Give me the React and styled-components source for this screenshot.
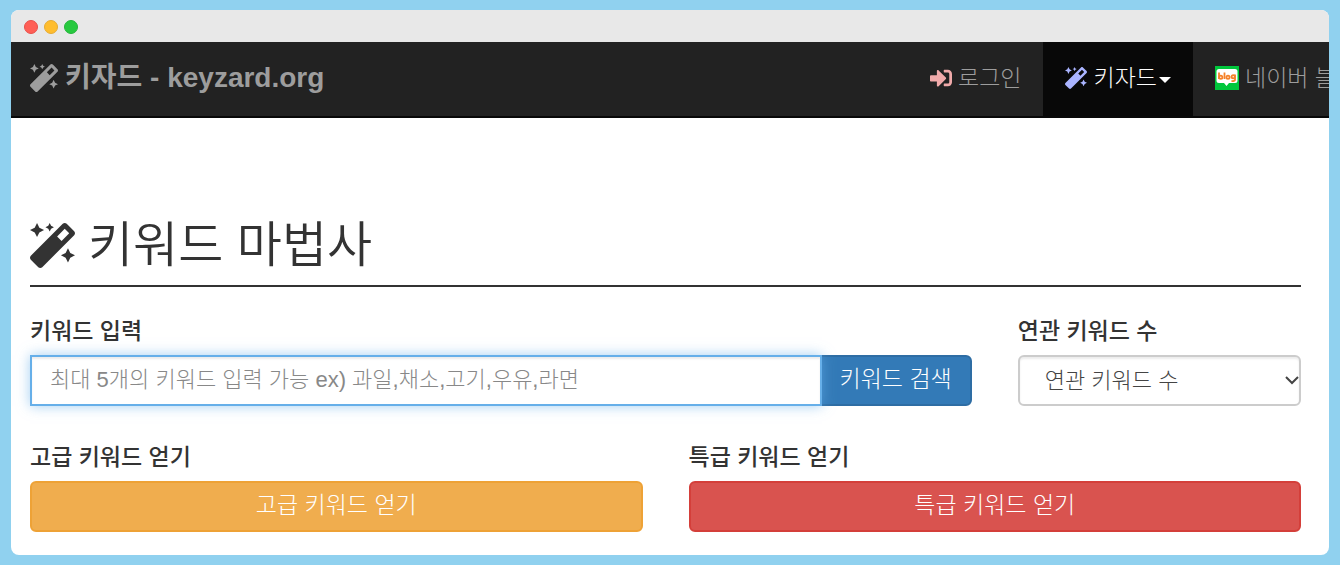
import React from "react";
import styled, { createGlobalStyle, css } from "styled-components";
import { FaMagic, FaSignInAlt } from "react-icons/fa";

const GlobalStyle = createGlobalStyle`
  *, *::before, *::after { box-sizing: border-box; }
  body {
    margin: 0;
    background: #90d1ef;
    color: #333;
    font-family: "Liberation Sans", "Noto Sans CJK KR", sans-serif;
    font-size: 22px;
    font-weight: 300;
    line-height: 30px;
  }
  button, input, select { font: inherit; }
`;

const Page = styled.div`
  min-height: 100vh;
  padding: 10px 11px;
  display: flex;
`;

const Window = styled.div`
  flex: 1;
  min-width: 0;
  background: #fff;
  border-radius: 8px;
  overflow: hidden;
`;

const TitleBar = styled.div`
  display: flex;
  align-items: center;
  gap: 6px;
  height: 32px;
  padding: 2px 13px 0;
  background: #e8e8e8;
`;

const Light = styled.span`
  width: 14px;
  height: 14px;
  border-radius: 50%;
  background: ${(p) => p.$fill};
  border: 1px solid ${(p) => p.$edge};
`;

const Navbar = styled.nav`
  display: flex;
  justify-content: space-between;
  height: 76px;
  background: #222;
  border-bottom: 2px solid #080808;
`;

const Brand = styled.a`
  display: flex;
  align-items: center;
  gap: 7px;
  padding: 0 0 2px 19px;
  color: #9d9d9d;
  font-size: 28px;
  font-weight: 700;
  text-decoration: none;
  white-space: nowrap;
`;

const NavList = styled.ul`
  display: flex;
  flex: 0 0 421px;
  margin: 0;
  padding: 0;
  list-style: none;
  overflow: hidden;
`;

const NavItem = styled.li`
  display: flex;
  flex: none;
`;

const NavLink = styled.a`
  display: flex;
  align-items: center;
  gap: 6px;
  padding: 0 22px 2px;
  color: ${(p) => (p.$active ? "#fff" : "#9d9d9d")};
  background: ${(p) => (p.$active ? "#080808" : "transparent")};
  font-size: 23px;
  text-decoration: none;
  white-space: nowrap;
`;

const Caret = styled.span`
  margin-left: -4px;
  margin-top: 4px;
  border-top: 6px solid;
  border-left: 6px solid transparent;
  border-right: 6px solid transparent;
`;

const Content = styled.main`
  padding: 97px 28px 23px 19px;
`;

const Heading = styled.h1`
  display: flex;
  align-items: center;
  gap: 13px;
  margin: 0 0 29px;
  padding-bottom: 10px;
  border-bottom: 2px solid #333;
  font-size: 49px;
  font-weight: 350;
  line-height: 60px;
`;

const FormGrid = styled.form`
  display: grid;
  grid-template-columns: repeat(12, minmax(0, 1fr));
  gap: 36px 46px;
`;

const Field = styled.div`
  grid-column: span ${(p) => p.$span};
  display: flex;
  flex-direction: column;
  gap: 9px;
`;

const Label = styled.label`
  font-size: 23px;
  font-weight: 500;
`;

const InputGroup = styled.div`
  display: flex;
`;

const control = css`
  height: 51px;
  border: 2px solid #ccc;
  border-radius: 6px;
  background: #fff;
`;

const TextInput = styled.input`
  ${control}
  flex: 1;
  min-width: 0;
  padding: 0 18px 2px;
  border-radius: 0;
  z-index: 1;
  color: #555;
  &:focus {
    outline: 0;
    border-color: #66afe9;
    box-shadow: inset 0 2px 2px rgba(0, 0, 0, 0.075), 0 0 12px rgba(102, 175, 233, 0.6);
  }
  &::placeholder { color: #888; opacity: 1; }
`;

const SelectBox = styled.div`
  position: relative;
  display: flex;

  svg {
    position: absolute;
    right: 1px;
    top: 20px;
    pointer-events: none;
  }
`;

const Select = styled.select`
  ${control}
  appearance: none;
  width: 100%;
  padding: 0 25px;
  color: #444;
  box-shadow: inset 0 2px 2px rgba(0, 0, 0, 0.075);
`;

const tones = {
  primary: ["#337ab7", "#2e6da4"],
  warning: ["#f0ad4e", "#eea236"],
  danger: ["#d9534f", "#d43f3a"],
};

const Button = styled.button`
  ${control}
  padding: 0 18px 3px;
  color: #fff;
  font-size: 23px;
  white-space: nowrap;
  background: ${(p) => tones[p.$tone][0]};
  border-color: ${(p) => tones[p.$tone][1]};
`;

const SearchButton = styled(Button)`
  margin-left: -2px;
  border-radius: 0 6px 6px 0;
`;

function BlogIcon() {
  return (
    <svg width="24" height="24" viewBox="0 0 24 24" aria-hidden="true">
      <path fill="#00c73c" d="M0 0h24v24H0z" />
      <path fill="#fff" d="M4 3h16a2.500 2.500 0 0 1 2.500 2.500v9A2.500 2.500 0 0 1 20 17h-6l-2.500 3L9 17H4a2.500 2.500 0 0 1-2.500-2.500v-9A2.500 2.500 0 0 1 4 3z" />
      <g fill="none" stroke="#f5822a" strokeWidth="1.800">
        <path d="M4 6.500v6.500M9.500 6.500v6.500M20 8.500v5.500q0 1.200-3.500 1" />
        <circle cx="5.800" cy="11.300" r="1.600" />
        <circle cx="13" cy="11.200" r="1.600" />
        <circle cx="18.200" cy="10.700" r="1.600" />
      </g>
    </svg>
  );
}

function ChevronIcon() {
  return (
    <svg width="16" height="11" viewBox="0 0 16 11" aria-hidden="true">
      <path d="M2 2l6 6 6-6" fill="none" stroke="#444" strokeWidth="2" />
    </svg>
  );
}

export default function App() {
  return (
    <Page>
      <GlobalStyle />
      <Window>
        <TitleBar>
          <Light $fill="#ff5f56" $edge="#e8504a" />
          <Light $fill="#ffbd2e" $edge="#e6ab32" />
          <Light $fill="#27c93f" $edge="#24b53a" />
        </TitleBar>
        <Navbar>
          <Brand href="#">
            <FaMagic size={28} />
            키자드 - keyzard.org
          </Brand>
          <NavList>
            <NavItem>
              <NavLink href="#login">
                <FaSignInAlt size={22} color="#f0aaaa" />
                로그인
              </NavLink>
            </NavItem>
            <NavItem>
              <NavLink href="#keyzard" $active>
                <FaMagic size={22} color="#aab4ff" />
                키자드
                <Caret />
              </NavLink>
            </NavItem>
            <NavItem>
              <NavLink href="#blog">
                <BlogIcon />
                네이버 블로그
              </NavLink>
            </NavItem>
          </NavList>
        </Navbar>
        <Content>
          <Heading>
            <FaMagic size={45} />
            키워드 마법사
          </Heading>
          <FormGrid onSubmit={(e) => e.preventDefault()}>
            <Field $span={9}>
              <Label htmlFor="keyword">키워드 입력</Label>
              <InputGroup>
                <TextInput
                  id="keyword"
                  autoFocus
                  placeholder="최대 5개의 키워드 입력 가능 ex) 과일,채소,고기,우유,라면"
                />
                <SearchButton $tone="primary">키워드 검색</SearchButton>
              </InputGroup>
            </Field>
            <Field $span={3}>
              <Label htmlFor="count">연관 키워드 수</Label>
              <SelectBox>
                <Select id="count">
                  <option>연관 키워드 수</option>
                </Select>
                <ChevronIcon />
              </SelectBox>
            </Field>
            <Field $span={6}>
              <Label htmlFor="advanced">고급 키워드 얻기</Label>
              <Button id="advanced" type="button" $tone="warning">고급 키워드 얻기</Button>
            </Field>
            <Field $span={6}>
              <Label htmlFor="special">특급 키워드 얻기</Label>
              <Button id="special" type="button" $tone="danger">특급 키워드 얻기</Button>
            </Field>
          </FormGrid>
        </Content>
      </Window>
    </Page>
  );
}
